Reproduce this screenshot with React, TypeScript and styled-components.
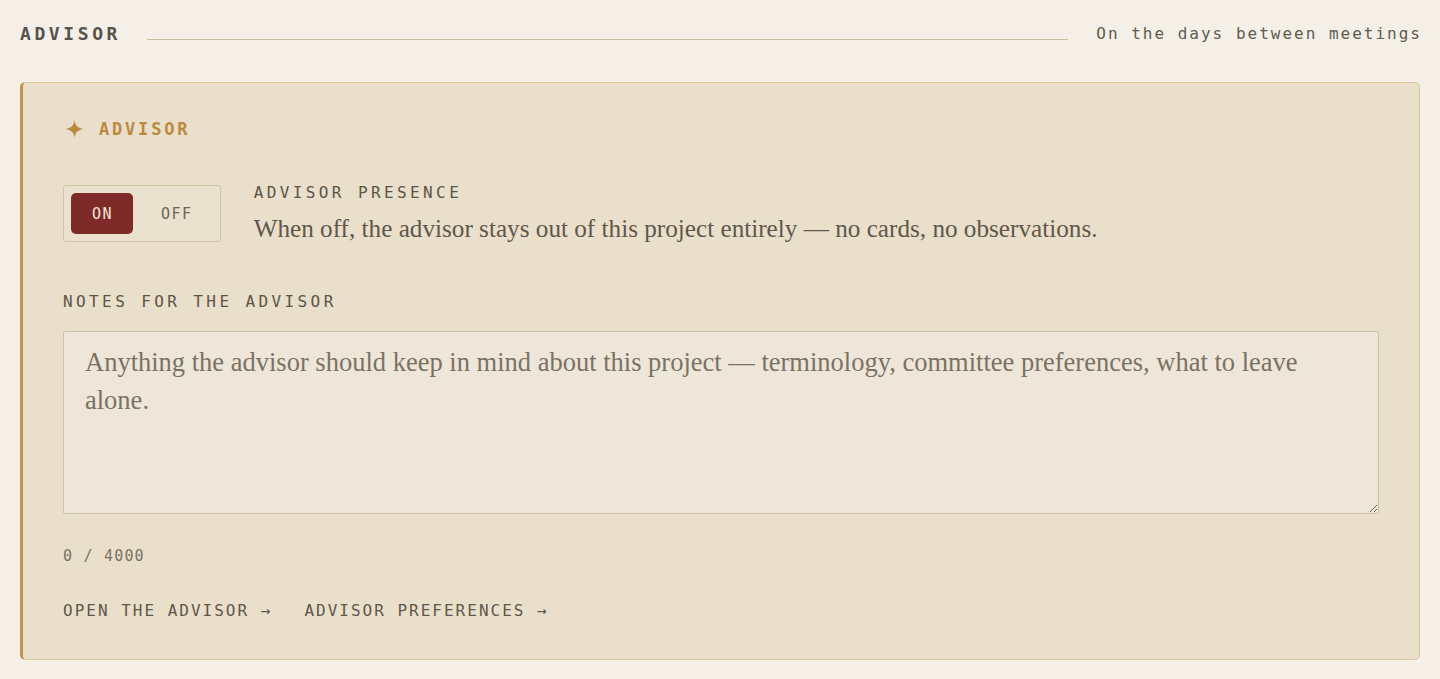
import styled, { createGlobalStyle } from "styled-components";

const mono = `"DejaVu Sans Mono", "Liberation Mono", monospace`;
const serif = `"Liberation Serif", "DejaVu Serif", serif`;

const GlobalStyle = createGlobalStyle`
  html, body {
    margin: 0;
    padding: 0;
    background: #f4f0e8;
  }
  * {
    box-sizing: border-box;
  }
`;

const Page = styled.div`
  padding: 17px 20px 20px;
  min-height: 679px;
  background: #f4f0e8;
`;

const SectionHeader = styled.header`
  display: flex;
  align-items: center;
  height: 34px;
`;

const SectionTitle = styled.h2`
  margin: 0;
  font-family: ${mono};
  font-size: 18px;
  font-weight: 700;
  letter-spacing: 3.6px;
  color: #57524a;
  line-height: 34px;
`;

const Rule = styled.div`
  flex: 1;
  height: 1px;
  margin: 10px 28px 0 26px;
  background: #c6c09b;
`;

const Tagline = styled.span`
  font-family: ${mono};
  font-size: 16px;
  letter-spacing: 2px;
  color: #615a4e;
  line-height: 34px;
  margin-right: -2px;
`;

const Card = styled.section`
  margin-top: 31px;
  background: #eadfca;
  border: 1px solid #dcc699;
  border-left: 3px solid #c0924a;
  border-radius: 5px;
  padding: 34px 40px 37px 40px;
  display: flex;
  flex-direction: column;
`;

const CardTitle = styled.div`
  display: flex;
  align-items: center;
  gap: 14px;
  height: 24px;
  font-family: ${mono};
  font-size: 17px;
  font-weight: 700;
  letter-spacing: 2.8px;
  color: #b88b40;
`;

const PresenceRow = styled.div`
  display: flex;
  align-items: center;
  gap: 33px;
  margin-top: 41px;
`;

const Toggle = styled.div`
  display: flex;
  gap: 7px;
  padding: 7px;
  border: 1px solid #d2c4a7;
  border-radius: 3px;
  background: #ebe1cf;
`;

const ToggleButton = styled.button<{ $active?: boolean }>`
  height: 41px;
  padding: 0 20px 0 21px;
  border: none;
  border-radius: 5px;
  font-family: ${mono};
  font-size: 15px;
  letter-spacing: 1.5px;
  cursor: pointer;
  background: ${(p) => (p.$active ? "#7e2a28" : "transparent")};
  color: ${(p) => (p.$active ? "#f3e4d6" : "#6d6557")};
`;

const PresenceText = styled.div`
  display: flex;
  flex-direction: column;
`;

const Label = styled.div`
  font-family: ${mono};
  font-size: 16px;
  letter-spacing: 3.4px;
  line-height: 22px;
  color: #5a5448;
`;

const Description = styled.p`
  margin: 9px 0 0;
  font-family: ${serif};
  font-size: 25.2px;
  line-height: 32px;
  color: #5f574b;
`;

const NotesLabel = styled(Label)`
  margin-top: 46px;
`;

const Notes = styled.textarea`
  margin-top: 18px;
  width: 100%;
  height: 183px;
  padding: 11px 40px 12px 21px;
  border: 1px solid #cfc2a3;
  border-radius: 2px;
  background: #eee6d8;
  font-family: ${serif};
  font-size: 26.5px;
  line-height: 38px;
  color: #5f574b;
  resize: vertical;
  outline: none;

  &::placeholder {
    color: #7b7264;
  }
`;

const Counter = styled.div`
  margin-top: 32px;
  font-family: ${mono};
  font-size: 15px;
  letter-spacing: 1.2px;
  line-height: 20px;
  color: #7a7164;
`;

const Links = styled.nav`
  display: flex;
  gap: 32px;
  margin-top: 34px;
`;

const LinkButton = styled.a`
  font-family: ${mono};
  font-size: 16px;
  letter-spacing: 2px;
  line-height: 22px;
  color: #5f574b;
  text-decoration: none;
  cursor: pointer;
`;

function Sparkle() {
  return (
    <svg width="22" height="22" viewBox="0 0 22 22" aria-hidden="true">
      <path
        d="M11.5 2 C12 7 14.2 9.9 20.5 11 C14.2 12.1 12 15 11.5 20 C11 15 8.8 12.1 2.5 11 C8.8 9.9 11 7 11.5 2 Z"
        fill="#b88b40"
      />
    </svg>
  );
}

export default function App() {
  return (
    <>
      <GlobalStyle />
      <Page>
        <SectionHeader>
          <SectionTitle>ADVISOR</SectionTitle>
          <Rule />
          <Tagline>On the days between meetings</Tagline>
        </SectionHeader>

        <Card>
          <CardTitle>
            <Sparkle />
            ADVISOR
          </CardTitle>

          <PresenceRow>
            <Toggle>
              <ToggleButton $active>ON</ToggleButton>
              <ToggleButton>OFF</ToggleButton>
            </Toggle>
            <PresenceText>
              <Label>ADVISOR PRESENCE</Label>
              <Description>
                When off, the advisor stays out of this project entirely — no
                cards, no observations.
              </Description>
            </PresenceText>
          </PresenceRow>

          <NotesLabel>NOTES FOR THE ADVISOR</NotesLabel>
          <Notes placeholder="Anything the advisor should keep in mind about this project — terminology, committee preferences, what to leave alone." />
          <Counter>0 / 4000</Counter>

          <Links>
            <LinkButton>OPEN THE ADVISOR →</LinkButton>
            <LinkButton>ADVISOR PREFERENCES →</LinkButton>
          </Links>
        </Card>
      </Page>
    </>
  );
}
